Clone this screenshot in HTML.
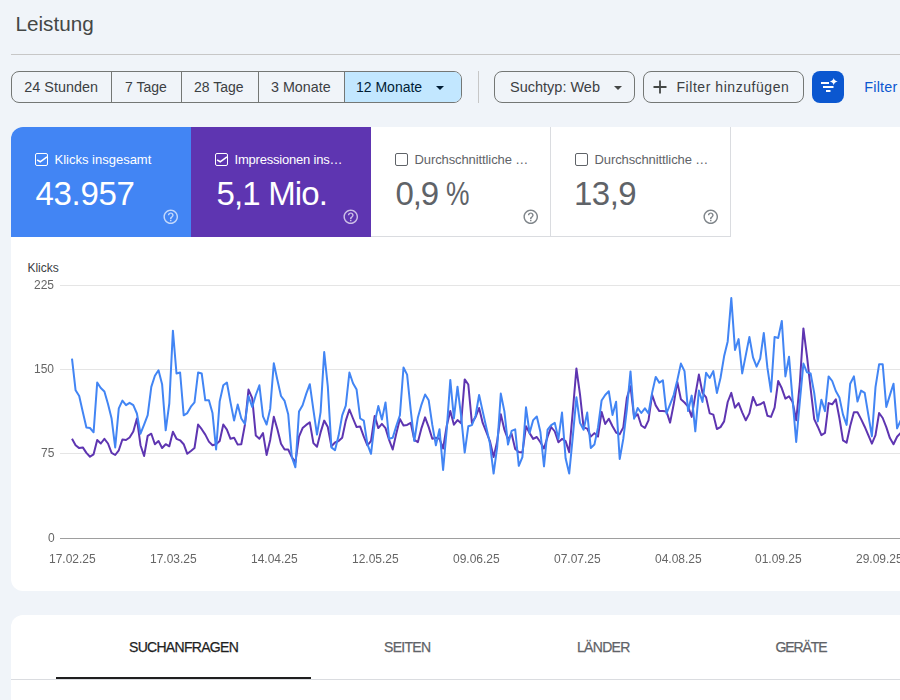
<!DOCTYPE html>
<html><head><meta charset="utf-8">
<style>
*{box-sizing:border-box;margin:0;padding:0}
html,body{width:900px;height:700px;overflow:hidden;background:#f0f4f9;font-family:"Liberation Sans",sans-serif}
.a{position:absolute;white-space:nowrap;line-height:1}
#title{left:15.5px;top:13.8px;font-size:20.7px;color:#444746}
#hr{position:absolute;left:11px;top:54px;width:900px;height:1px;background:#c7c7c7}
#seg{position:absolute;left:11px;top:71px;width:451px;height:32px;border:1px solid #747775;border-radius:8px;overflow:hidden}
.sd{position:absolute;top:0;width:1px;height:30px;background:#747775}
.bt{font-size:14px;color:#3c4043;top:80px}
#sel{position:absolute;left:332px;top:0;width:118px;height:30px;background:#c2e7ff}
#vsep{position:absolute;left:478px;top:71px;width:1px;height:32px;background:#c7c7c7}
.ob{position:absolute;top:71px;height:32px;border:1px solid #747775;border-radius:8px}
#ib{position:absolute;left:812px;top:71px;width:32px;height:32px;border-radius:8px;background:#0b57d0}
#card{position:absolute;left:11px;top:127px;width:1000px;height:464px;background:#fff;border-radius:12px 0 0 12px;overflow:hidden}
.mc{position:absolute;top:0;width:180px;height:110px}
.lbl{font-size:13px;top:25.8px;left:43.5px}
.val{font-size:33px;top:50.1px;left:24.5px;letter-spacing:-0.3px}
.cb{position:absolute;left:24px;top:26px;width:13px;height:13px;border:1.6px solid;border-radius:2px}
.q{position:absolute;left:150.5px;top:80.5px}
#card2{position:absolute;left:11px;top:615px;width:1000px;height:200px;background:#fff;border-radius:12px 0 0 0}
.tab{font-size:14px;top:25.1px;color:#5f6368;letter-spacing:-0.7px;-webkit-text-stroke:0.25px currentColor}
.yl{font-size:12px;color:#666;will-change:transform}
.xl{font-size:12px;color:#666;top:425.7px;will-change:transform}
</style></head><body>
<div id="title" class="a">Leistung</div>
<div id="hr"></div>

<div id="seg">
  <div id="sel"></div>
  <div class="sd" style="left:99px"></div>
  <div class="sd" style="left:168.5px"></div>
  <div class="sd" style="left:245.5px"></div>
  <div class="sd" style="left:331.5px"></div>
</div>
<div class="a bt" style="left:24.3px;font-size:14.4px">24 Stunden</div>
<div class="a bt" style="left:125px">7 Tage</div>
<div class="a bt" style="left:194px">28 Tage</div>
<div class="a bt" style="left:271px;font-size:14.3px">3 Monate</div>
<div class="a bt" style="left:356px;color:#001d35">12 Monate</div>
<svg class="a" style="left:435px;top:85px" width="10" height="6"><path d="M1 1h8l-4 4z" fill="#001d35"/></svg>

<div id="vsep"></div>
<div class="ob" style="left:494px;width:141px"></div>
<div class="a bt" style="left:510px;font-size:14.5px">Suchtyp: Web</div>
<svg class="a" style="left:613px;top:85px" width="10" height="6"><path d="M1 1h8l-4 4z" fill="#444746"/></svg>
<div class="ob" style="left:643px;width:161px"></div>
<svg class="a" style="left:653px;top:80px" width="14" height="14"><path d="M7 0.5v13M0.5 7h13" stroke="#444746" stroke-width="1.8"/></svg>
<div class="a bt" style="left:676.5px;letter-spacing:0.55px">Filter hinzufügen</div>
<div id="ib">
  <svg width="32" height="32" style="position:absolute;left:0;top:0">
    <rect x="9" y="11" width="8" height="2" fill="#fff"/>
    <rect x="11" y="15" width="10.5" height="2" fill="#fff"/>
    <rect x="14" y="19" width="4.5" height="2" fill="#fff"/>
    <path d="M21.7 7 Q22.3 9.9 25.7 10.6 Q22.3 11.3 21.7 14.2 Q21.1 11.3 17.7 10.6 Q21.1 9.9 21.7 7z" fill="#fff"/>
  </svg>
</div>
<div class="a bt" style="left:864.3px;color:#0b57d0;font-size:14.4px;letter-spacing:0.2px">Filter</div>

<div id="card">
  <div class="mc" style="left:0;background:#4285f4;color:#fff">
    <div class="cb" style="border-color:#fff"><svg width="12" height="12" style="position:absolute;left:-1.6px;top:-1.6px;overflow:visible"><path d="M3.1 7.9L6.2 9.8 13 4.9" stroke="#fff" stroke-width="1.6" fill="none"/></svg></div>
    <div class="a lbl">Klicks insgesamt</div>
    <div class="a val">43.957</div>
    <svg class="q" width="17.5" height="17.5" viewBox="0 0 24 24"><path d="M11 18h2v-2h-2v2zm1-16C6.48 2 2 6.48 2 12s4.48 10 10 10 10-4.48 10-10S17.52 2 12 2zm0 18c-4.41 0-8-3.59-8-8s3.59-8 8-8 8 3.59 8 8-3.59 8-8 8zm0-14c-2.21 0-4 1.79-4 4h2c0-1.1.9-2 2-2s2 .9 2 2c0 2-3 1.75-3 5h2c0-2.25 3-2.5 3-5 0-2.21-1.79-4-4-4z" fill="rgba(255,255,255,.68)"/></svg>
  </div>
  <div class="mc" style="left:180px;background:#5e35b1;color:#fff">
    <div class="cb" style="border-color:#fff"><svg width="12" height="12" style="position:absolute;left:-1.6px;top:-1.6px;overflow:visible"><path d="M3.1 7.9L6.2 9.8 13 4.9" stroke="#fff" stroke-width="1.6" fill="none"/></svg></div>
    <div class="a lbl" style="letter-spacing:-0.2px">Impressionen ins…</div>
    <div class="a val" style="left:25.5px;letter-spacing:-0.85px">5,1 Mio.</div>
    <svg class="q" width="17.5" height="17.5" viewBox="0 0 24 24"><path d="M11 18h2v-2h-2v2zm1-16C6.48 2 2 6.48 2 12s4.48 10 10 10 10-4.48 10-10S17.52 2 12 2zm0 18c-4.41 0-8-3.59-8-8s3.59-8 8-8 8 3.59 8 8-3.59 8-8 8zm0-14c-2.21 0-4 1.79-4 4h2c0-1.1.9-2 2-2s2 .9 2 2c0 2-3 1.75-3 5h2c0-2.25 3-2.5 3-5 0-2.21-1.79-4-4-4z" fill="rgba(255,255,255,.68)"/></svg>
  </div>
  <div class="mc" style="left:360px;color:#5f6368;border-right:1px solid #dadce0;border-bottom:1px solid #dadce0">
    <div class="cb" style="border-color:#5f6368"></div>
    <div class="a lbl" style="letter-spacing:-0.1px">Durchschnittliche …</div>
    <div class="a val" style="letter-spacing:-1.1px">0,9</div><div class="a val" style="left:74.5px;transform:scaleX(0.8);transform-origin:left">%</div>
    <svg class="q" width="17.5" height="17.5" viewBox="0 0 24 24"><path d="M11 18h2v-2h-2v2zm1-16C6.48 2 2 6.48 2 12s4.48 10 10 10 10-4.48 10-10S17.52 2 12 2zm0 18c-4.41 0-8-3.59-8-8s3.59-8 8-8 8 3.59 8 8-3.59 8-8 8zm0-14c-2.21 0-4 1.79-4 4h2c0-1.1.9-2 2-2s2 .9 2 2c0 2-3 1.75-3 5h2c0-2.25 3-2.5 3-5 0-2.21-1.79-4-4-4z" fill="#80868b"/></svg>
  </div>
  <div class="mc" style="left:540px;color:#5f6368;border-right:1px solid #dadce0;border-bottom:1px solid #dadce0">
    <div class="cb" style="border-color:#5f6368"></div>
    <div class="a lbl" style="letter-spacing:-0.1px">Durchschnittliche …</div>
    <div class="a val" style="left:23px;letter-spacing:-0.5px">13,9</div>
    <svg class="q" width="17.5" height="17.5" viewBox="0 0 24 24"><path d="M11 18h2v-2h-2v2zm1-16C6.48 2 2 6.48 2 12s4.48 10 10 10 10-4.48 10-10S17.52 2 12 2zm0 18c-4.41 0-8-3.59-8-8s3.59-8 8-8 8 3.59 8 8-3.59 8-8 8zm0-14c-2.21 0-4 1.79-4 4h2c0-1.1.9-2 2-2s2 .9 2 2c0 2-3 1.75-3 5h2c0-2.25 3-2.5 3-5 0-2.21-1.79-4-4-4z" fill="#80868b"/></svg>
  </div>

  <div class="a" style="left:16.4px;top:134.7px;font-size:12px;color:#3c4043">Klicks</div>
  <div class="a yl" style="left:23px;top:151.7px">225</div>
  <div class="a yl" style="left:23px;top:235.8px">150</div>
  <div class="a yl" style="left:29.7px;top:320.2px">75</div>
  <div class="a yl" style="left:36.5px;top:404.6px">0</div>
  <div style="position:absolute;left:49px;top:158px;width:1000px;height:1px;background:#e5e5e5"></div>
  <div style="position:absolute;left:49px;top:242px;width:1000px;height:1px;background:#e5e5e5"></div>
  <div style="position:absolute;left:49px;top:326px;width:1000px;height:1px;background:#e5e5e5"></div>
  <div style="position:absolute;left:49px;top:410.5px;width:1000px;height:1px;background:#9e9e9e"></div>
  <div class="a xl" style="left:37.9px">17.02.25</div>
  <div class="a xl" style="left:139px">17.03.25</div>
  <div class="a xl" style="left:240px">14.04.25</div>
  <div class="a xl" style="left:341px">12.05.25</div>
  <div class="a xl" style="left:441.5px">09.06.25</div>
  <div class="a xl" style="left:542.5px">07.07.25</div>
  <div class="a xl" style="left:643.5px">04.08.25</div>
  <div class="a xl" style="left:743.5px">01.09.25</div>
  <div class="a xl" style="left:845px">29.09.25</div>
  <svg id="chart" style="position:absolute;left:-11px;top:-127px" width="1000" height="700">
    <polyline points="72.0,438.7 75.6,445.2 79.2,448.1 82.8,447.4 86.4,452.9 90.0,456.7 93.6,454.3 97.2,440.0 100.8,443.5 104.4,438.9 108.0,443.5 111.6,452.9 115.2,455.0 118.8,450.3 122.4,439.5 126.0,440.0 129.6,437.5 133.3,431.5 136.9,418.6 140.5,445.2 144.1,456.0 147.7,435.8 151.3,433.7 154.9,444.3 158.5,441.0 162.1,448.0 165.7,444.2 169.3,446.3 172.9,431.8 176.5,438.8 180.1,440.3 183.7,444.2 187.3,453.8 190.9,451.0 194.5,448.0 198.1,424.5 201.7,429.2 205.3,434.6 208.9,441.6 212.5,445.3 216.1,444.2 219.7,441.0 223.3,424.5 226.9,429.6 230.5,438.8 234.1,437.8 237.7,444.6 241.3,444.2 244.9,424.9 248.5,389.6 252.2,398.2 255.8,435.6 259.4,438.8 263.0,433.1 266.6,454.9 270.2,439.9 273.8,416.8 277.4,429.2 281.0,443.8 284.6,449.5 288.2,449.5 291.8,457.0 295.4,462.4 299.0,436.7 302.6,428.1 306.2,424.9 309.8,422.4 313.4,443.1 317.0,446.8 320.6,432.4 324.2,420.6 327.8,427.1 331.4,446.3 335.0,442.5 338.6,441.0 342.2,437.8 345.8,420.6 349.4,409.5 353.0,418.5 356.6,427.1 360.2,426.6 363.8,436.7 367.4,445.3 371.0,441.0 374.7,415.9 378.3,428.1 381.9,423.9 385.5,428.1 389.1,439.9 392.7,449.5 396.3,433.5 399.9,418.9 403.5,425.4 407.1,424.9 410.7,422.8 414.3,439.9 417.9,442.1 421.5,428.1 425.1,417.4 428.7,427.1 432.3,438.8 435.9,437.8 439.5,438.8 443.1,448.5 446.7,426.0 450.3,411.0 453.9,424.7 457.5,420.1 461.1,423.3 464.7,379.4 468.3,384.5 471.9,422.9 475.5,417.1 479.1,408.0 482.7,422.9 486.3,432.0 489.9,441.1 493.6,457.1 497.2,441.1 500.8,414.2 504.4,429.7 508.0,439.3 511.6,433.8 515.2,449.1 518.8,452.1 522.4,452.6 526.0,426.3 529.6,433.1 533.2,438.9 536.8,437.0 540.4,442.3 544.0,448.5 547.6,436.6 551.2,427.0 554.8,431.5 558.4,442.3 562.0,438.9 565.6,441.1 569.2,452.1 572.8,411.4 576.4,368.5 580.0,394.3 583.6,427.4 587.2,428.6 590.8,436.6 594.4,433.1 598.0,436.6 601.6,411.9 605.2,424.0 608.8,418.7 612.5,426.3 616.1,432.5 619.7,434.3 623.3,427.4 626.9,397.7 630.5,386.3 634.1,417.1 637.7,414.2 641.3,425.5 644.9,428.0 648.5,420.3 652.1,394.7 655.7,405.4 659.3,411.1 662.9,411.1 666.5,411.6 670.1,422.6 673.7,404.3 677.3,381.9 680.9,399.3 684.5,402.5 688.1,406.6 691.7,416.9 695.3,395.1 698.9,374.6 702.5,392.9 706.1,397.4 709.7,413.4 713.3,414.6 716.9,429.0 720.5,427.1 724.1,421.4 727.7,402.0 731.3,392.9 735.0,407.7 738.6,403.1 742.2,412.3 745.8,420.3 749.4,413.4 753.0,397.0 756.6,405.4 760.2,404.3 763.8,402.0 767.4,415.7 771.0,416.9 774.6,407.7 778.2,381.0 781.8,388.3 785.4,398.6 789.0,396.3 792.6,402.0 796.2,420.3 799.8,383.7 803.4,328.4 807.0,356.3 810.6,388.3 814.2,419.1 817.8,426.7 821.4,435.1 825.0,432.9 828.6,403.1 832.2,404.3 835.8,399.3 839.4,418.0 843.0,440.4 846.6,442.7 850.2,426.0 853.9,412.3 857.5,412.3 861.1,419.1 864.7,426.7 868.3,435.1 871.9,443.6 875.5,435.1 879.1,413.0 882.7,418.0 886.3,427.1 889.9,438.1 893.5,444.3 897.1,436.7 900.7,432.9" fill="none" stroke="#5e35b1" stroke-width="2" stroke-linejoin="round"/>
    <polyline points="72.0,358.6 75.6,390.3 79.2,396.0 82.8,412.0 86.4,427.5 90.0,428.0 93.6,432.3 97.2,382.6 100.8,388.0 104.4,391.5 108.0,404.0 111.6,418.6 115.2,447.4 118.8,408.3 122.4,400.6 126.0,405.2 129.6,402.8 133.3,405.2 136.9,413.5 140.5,433.7 144.1,424.6 147.7,415.2 151.3,386.9 154.9,375.7 158.5,370.3 162.1,384.2 165.7,430.3 169.3,403.5 172.9,330.7 176.5,373.5 180.1,372.5 183.7,415.3 187.3,413.1 190.9,406.7 194.5,402.4 198.1,372.5 201.7,373.5 205.3,400.3 208.9,400.3 212.5,413.1 216.1,449.5 219.7,401.4 223.3,385.3 226.9,382.5 230.5,402.4 234.1,420.6 237.7,404.6 241.3,418.5 244.9,423.9 248.5,396.0 252.2,407.0 255.8,395.0 259.4,385.3 263.0,416.4 266.6,424.5 270.2,408.9 273.8,363.3 277.4,380.0 281.0,396.0 284.6,400.9 288.2,414.2 291.8,457.0 295.4,467.3 299.0,411.6 302.6,405.2 306.2,393.9 309.8,384.2 313.4,409.9 317.0,434.6 320.6,412.1 324.2,352.1 327.8,386.4 331.4,447.4 335.0,450.2 338.6,435.6 342.2,415.3 345.8,405.7 349.4,372.5 353.0,383.2 356.6,389.6 360.2,418.5 363.8,420.6 367.4,444.2 371.0,453.8 374.7,422.8 378.3,406.1 381.9,419.6 385.5,402.4 389.1,438.8 392.7,437.8 396.3,426.0 399.9,415.3 403.5,367.5 407.1,374.6 410.7,409.9 414.3,441.0 417.9,417.4 421.5,404.6 425.1,394.5 428.7,400.3 432.3,424.9 435.9,445.3 439.5,429.2 443.1,470.0 446.7,430.0 450.3,379.9 453.9,418.3 457.5,386.7 461.1,416.0 464.7,452.6 468.3,426.3 471.9,425.1 475.5,416.0 479.1,395.0 482.7,411.4 486.3,427.4 489.9,443.4 493.6,473.6 497.2,446.9 500.8,393.6 504.4,411.4 508.0,444.6 511.6,430.9 515.2,429.3 518.8,465.8 522.4,457.1 526.0,407.3 529.6,433.1 533.2,420.1 536.8,416.5 540.4,432.0 544.0,466.3 547.6,429.7 551.2,425.1 554.8,422.9 558.4,438.9 562.0,412.6 565.6,458.3 569.2,473.6 572.8,436.6 576.4,397.3 580.0,422.9 583.6,429.7 587.2,412.6 590.8,448.0 594.4,444.6 598.0,427.4 601.6,400.5 605.2,395.0 608.8,391.3 612.5,414.9 616.1,401.8 619.7,459.0 623.3,438.9 626.9,409.1 630.5,371.4 634.1,418.7 637.7,408.0 641.3,413.0 644.9,408.4 648.5,413.4 652.1,392.9 655.7,376.9 659.3,382.6 662.9,380.3 666.5,413.4 670.1,404.3 673.7,395.1 677.3,380.3 680.9,363.6 684.5,371.1 688.1,411.1 691.7,395.6 695.3,431.3 698.9,390.6 702.5,402.0 706.1,372.7 709.7,378.0 713.3,371.1 716.9,392.9 720.5,378.0 724.1,356.3 727.7,341.4 731.3,298.0 735.0,349.9 738.6,339.1 742.2,373.4 745.8,355.1 749.4,336.9 753.0,357.4 756.6,366.6 760.2,358.6 763.8,333.0 767.4,367.7 771.0,391.7 774.6,336.9 778.2,338.0 781.8,320.9 785.4,376.4 789.0,356.7 792.6,399.7 796.2,442.0 799.8,402.0 803.4,363.6 807.0,372.3 810.6,373.4 814.2,392.9 817.8,421.4 821.4,399.7 825.0,411.1 828.6,376.4 832.2,381.0 835.8,391.0 839.4,397.4 843.0,414.6 846.6,424.9 850.2,383.7 853.9,376.4 857.5,401.5 861.1,390.6 864.7,392.9 868.3,414.6 871.9,436.3 875.5,387.1 879.1,364.3 882.7,364.3 886.3,407.0 889.9,395.1 893.5,383.7 897.1,428.3 900.7,420.3" fill="none" stroke="#4285f4" stroke-width="2" stroke-linejoin="round"/>
  </svg>
</div>

<div id="card2">
  <div class="a tab" style="left:118px;color:#1f1f1f">SUCHANFRAGEN</div>
  <div class="a tab" style="left:373px">SEITEN</div>
  <div class="a tab" style="left:566px">LÄNDER</div>
  <div class="a tab" style="left:764.5px;letter-spacing:-1.1px">GERÄTE</div>
  <div style="position:absolute;left:45px;top:62px;width:255px;height:2px;background:#1f1f1f"></div>
  <div style="position:absolute;left:0;top:64px;width:1000px;height:1px;background:#dadce0"></div>
</div>
</body></html>
